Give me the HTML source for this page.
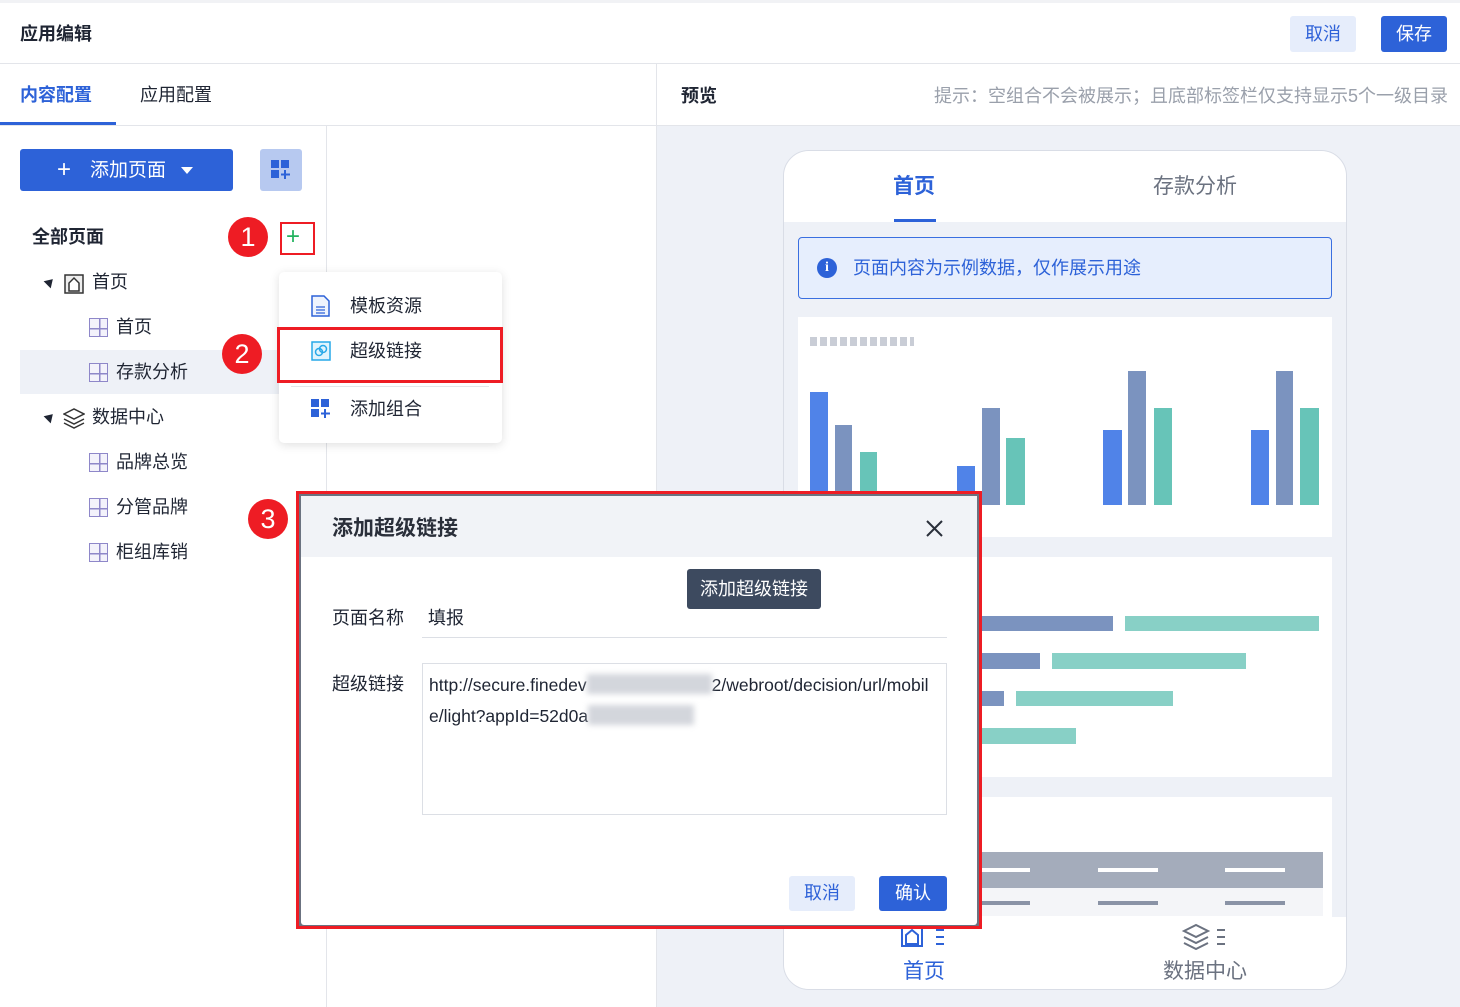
<!DOCTYPE html>
<html><head><meta charset="utf-8"><style>
*{margin:0;padding:0;box-sizing:border-box}
body{width:1460px;height:1007px;position:relative;overflow:hidden;background:#fff;font-family:"Liberation Sans","Noto Sans CJK SC",sans-serif;color:#1f2533}
.a{position:absolute}
.t{position:absolute;white-space:nowrap;line-height:1}
.circ{position:absolute;width:40px;height:40px;border-radius:50%;background:#ee1c24;color:#fff;font-size:27px;text-align:center;line-height:40px}
.pic{position:absolute;width:19px;height:19px;border:1.5px solid #8e87c9;background:linear-gradient(#8e87c9,#8e87c9) 9px 0/1.5px 100% no-repeat,linear-gradient(#8e87c9,#8e87c9) 0 9px/100% 1.5px no-repeat,#f3f2fb}
</style></head><body>
<!-- top bar -->
<div class="a" style="left:0;top:0;width:1460px;height:3px;background:#f1f2f5"></div>
<div class="t" style="left:20px;top:25px;font-size:18px;font-weight:bold">应用编辑</div>
<div class="a" style="left:1290px;top:16px;width:66px;height:36px;background:#e6edfb;border-radius:3px;color:#2f62d8;font-size:18px;text-align:center;line-height:36px">取消</div>
<div class="a" style="left:1381px;top:16px;width:66px;height:36px;background:#2d62d8;border-radius:3px;color:#fff;font-size:18px;text-align:center;line-height:36px">保存</div>
<div class="a" style="left:0;top:63px;width:1460px;height:1px;background:#e3e5ea"></div>
<!-- tabs -->
<div class="t" style="left:20px;top:86px;font-size:18px;color:#2d62d8;font-weight:bold">内容配置</div>
<div class="a" style="left:0;top:122px;width:116px;height:3px;background:#2d62d8"></div>
<div class="t" style="left:140px;top:86px;font-size:18px">应用配置</div>
<div class="a" style="left:0;top:125px;width:656px;height:1px;background:#e3e5ea"></div>
<div class="a" style="left:656px;top:64px;width:1px;height:943px;background:#e3e5ea"></div>
<div class="a" style="left:326px;top:126px;width:1px;height:881px;background:#e3e5ea"></div>
<!-- right panel -->
<div class="a" style="left:657px;top:64px;width:803px;height:62px;background:#fff;border-bottom:1px solid #e3e5ea"></div>
<div class="t" style="left:681px;top:87px;font-size:18px;font-weight:bold">预览</div>
<div class="t" style="right:12px;top:87px;font-size:18px;color:#9aa0ab">提示：空组合不会被展示；且底部标签栏仅支持显示5个一级目录</div>
<div class="a" style="left:657px;top:126px;width:803px;height:881px;background:#eef1f7"></div>
<!-- phone -->
<div class="a" style="left:783px;top:150px;width:564px;height:840px;background:#eef1f7;border:1px solid #d9dde6;border-radius:26px;overflow:hidden">
 <div class="a" style="left:0;top:0;width:564px;height:71px;background:#fff"></div>
 <div class="t" style="left:109px;top:25px;font-size:21px;color:#2d62d8;font-weight:bold">首页</div>
 <div class="a" style="left:110px;top:68px;width:42px;height:3px;background:#2d62d8"></div>
 <div class="t" style="left:369px;top:25px;font-size:21px;color:#6b7280">存款分析</div>
 <div class="a" style="left:14px;top:86px;width:534px;height:62px;background:#e6eefd;border:1px solid #3a6fe0;border-radius:4px"></div>
 <div class="a" style="left:33px;top:107px;width:20px;height:20px;border-radius:50%;background:#2d62d8;color:#fff;font-size:14px;font-weight:bold;text-align:center;line-height:20px;font-family:'Liberation Serif',serif">i</div>
 <div class="t" style="left:69px;top:108px;font-size:18px;color:#2d62d8">页面内容为示例数据，仅作展示用途</div>
 <div class="a" style="left:14px;top:166px;width:534px;height:220px;background:#fff"></div>
 <div class="a" style="left:14px;top:406px;width:534px;height:220px;background:#fff"></div>
 <div class="a" style="left:14px;top:646px;width:534px;height:120px;background:#fff"></div>
 <div class="a" style="left:0;top:766px;width:564px;height:74px;background:#fff"></div>
</div>
<!-- chart 1 -->
<div class="a" style="left:810px;top:337px;width:104px;height:9px;background:repeating-linear-gradient(90deg,#c9cdd6 0 7px,transparent 7px 10px)"></div>
<div class="a" style="left:810px;top:392px;width:18px;height:113px;background:#5083e8"></div>
<div class="a" style="left:835px;top:425px;width:17px;height:80px;background:#7b93bf"></div>
<div class="a" style="left:860px;top:452px;width:17px;height:53px;background:#67c4b8"></div>
<div class="a" style="left:957px;top:466px;width:18px;height:39px;background:#5083e8"></div>
<div class="a" style="left:982px;top:408px;width:18px;height:97px;background:#7b93bf"></div>
<div class="a" style="left:1006px;top:438px;width:19px;height:67px;background:#67c4b8"></div>
<div class="a" style="left:1103px;top:430px;width:19px;height:75px;background:#5083e8"></div>
<div class="a" style="left:1128px;top:371px;width:18px;height:134px;background:#7b93bf"></div>
<div class="a" style="left:1154px;top:408px;width:18px;height:97px;background:#67c4b8"></div>
<div class="a" style="left:1251px;top:430px;width:18px;height:75px;background:#5083e8"></div>
<div class="a" style="left:1276px;top:371px;width:17px;height:134px;background:#7b93bf"></div>
<div class="a" style="left:1300px;top:408px;width:19px;height:97px;background:#67c4b8"></div>
<!-- chart 2 -->
<div class="a" style="left:900px;top:616px;width:213px;height:15px;background:#7b93bf"></div>
<div class="a" style="left:1125px;top:616px;width:194px;height:15px;background:#88d0c6"></div>
<div class="a" style="left:900px;top:653px;width:140px;height:16px;background:#7b93bf"></div>
<div class="a" style="left:1052px;top:653px;width:194px;height:16px;background:#88d0c6"></div>
<div class="a" style="left:900px;top:691px;width:104px;height:15px;background:#7b93bf"></div>
<div class="a" style="left:1016px;top:691px;width:157px;height:15px;background:#88d0c6"></div>
<div class="a" style="left:900px;top:728px;width:176px;height:16px;background:#88d0c6"></div>
<!-- table -->
<div class="a" style="left:810px;top:852px;width:513px;height:36px;background:#a4acbb"></div>
<div class="a" style="left:810px;top:888px;width:513px;height:28px;background:#f4f5f8"></div>
<div class="a" style="left:970px;top:868px;width:60px;height:4px;background:#fff"></div>
<div class="a" style="left:1098px;top:868px;width:60px;height:4px;background:#fff"></div>
<div class="a" style="left:1225px;top:868px;width:60px;height:4px;background:#fff"></div>
<div class="a" style="left:970px;top:901px;width:60px;height:4px;background:#8a93a6"></div>
<div class="a" style="left:1098px;top:901px;width:60px;height:4px;background:#8a93a6"></div>
<div class="a" style="left:1225px;top:901px;width:60px;height:4px;background:#8a93a6"></div>
<!-- bottom nav -->
<svg class="a" style="left:900px;top:925px" width="48" height="24"><rect x="2" y="2" width="20" height="19" fill="none" stroke="#2d62d8" stroke-width="2"/><path d="M6 19V10l6-5 6 5v9z" fill="none" stroke="#2d62d8" stroke-width="2"/><path d="M36 5h8M36 12h8M36 19h8" stroke="#2d62d8" stroke-width="2"/></svg>
<div class="t" style="left:903px;top:961px;font-size:21px;color:#2d62d8">首页</div>
<svg class="a" style="left:1181px;top:922px" width="48" height="28"><path d="M3 9l12-6 12 6-12 6z M3 15l12 6 12-6 M3 21l12 6 12-6" fill="none" stroke="#6b7280" stroke-width="2"/><path d="M36 8h8M36 15h8M36 22h8" stroke="#6b7280" stroke-width="2"/></svg>
<div class="t" style="left:1163px;top:961px;font-size:21px;color:#6b7280">数据中心</div>

<!-- left panel -->
<div class="a" style="left:20px;top:149px;width:213px;height:42px;background:#2d62d8;border-radius:3px"></div>
<div class="t" style="left:57px;top:158px;font-size:24px;color:#fff;font-weight:300">+</div>
<div class="t" style="left:90px;top:161px;font-size:19px;color:#fff">添加页面</div>
<div class="a" style="left:181px;top:167px;border:6px solid transparent;border-top:7px solid #fff;border-bottom:0"></div>
<div class="a" style="left:260px;top:149px;width:42px;height:42px;background:#b7c9f0;border-radius:3px"></div>
<svg class="a" style="left:271px;top:160px" width="20" height="20"><rect x="0" y="0" width="8" height="8" fill="#2d62d8"/><rect x="10" y="0" width="8" height="8" fill="#2d62d8"/><rect x="0" y="10" width="8" height="8" fill="#2d62d8"/><path d="M14 10v9M10 14.5h9" stroke="#2d62d8" stroke-width="2"/></svg>
<div class="t" style="left:32px;top:228px;font-size:18px;font-weight:bold">全部页面</div>
<div class="circ" style="left:228px;top:217px">1</div>
<div class="a" style="left:280px;top:222px;width:35px;height:33px;border:2px solid #ee1c24"></div>
<div class="t" style="left:286px;top:225px;font-size:24px;color:#22b35e">+</div>
<!-- tree -->
<div class="a" style="left:45px;top:278px;border:5px solid transparent;border-bottom:8px solid #1f2533;border-top:0;transform:rotate(45deg)"></div>
<svg class="a" style="left:64px;top:274px" width="20" height="20"><rect x="1" y="1" width="18" height="18" fill="#eee" stroke="#333" stroke-width="1.5"/><path d="M5 17V9l5-5 5 5v8z" fill="#fff" stroke="#333" stroke-width="1.5"/></svg>
<div class="t" style="left:92px;top:273px;font-size:18px">首页</div>
<div class="pic" style="left:89px;top:318px"></div>
<div class="t" style="left:116px;top:318px;font-size:18px">首页</div>
<div class="a" style="left:20px;top:350px;width:260px;height:44px;background:#eef1f7"></div>
<div class="pic" style="left:89px;top:363px"></div>
<div class="t" style="left:116px;top:363px;font-size:18px">存款分析</div>
<div class="a" style="left:45px;top:413px;border:5px solid transparent;border-bottom:8px solid #1f2533;border-top:0;transform:rotate(45deg)"></div>
<svg class="a" style="left:63px;top:407px" width="22" height="22"><path d="M1 7l10-5 10 5-10 5z M1 12l10 5 10-5 M1 16l10 5 10-5" fill="none" stroke="#333" stroke-width="1.5"/></svg>
<div class="t" style="left:92px;top:408px;font-size:18px">数据中心</div>
<div class="pic" style="left:89px;top:453px"></div>
<div class="t" style="left:116px;top:453px;font-size:18px">品牌总览</div>
<div class="pic" style="left:89px;top:498px"></div>
<div class="t" style="left:116px;top:498px;font-size:18px">分管品牌</div>
<div class="pic" style="left:89px;top:543px"></div>
<div class="t" style="left:116px;top:543px;font-size:18px">柜组库销</div>
<!-- dropdown -->
<div class="a" style="left:279px;top:272px;width:223px;height:171px;background:#fff;border-radius:5px;box-shadow:0 2px 10px rgba(0,0,0,.13)"></div>
<svg class="a" style="left:311px;top:295px" width="20" height="22"><path d="M1 1h12l5 5v15H1z" fill="#eef3fd" stroke="#2d62d8" stroke-width="1.5"/><path d="M5 12h9M5 15h9M5 18h9" stroke="#2d62d8" stroke-width="1.2"/></svg>
<div class="t" style="left:350px;top:297px;font-size:18px">模板资源</div>
<svg class="a" style="left:311px;top:341px" width="20" height="20"><rect x="1" y="1" width="18" height="18" fill="#e0f4fd" stroke="#27a8e8" stroke-width="1.5"/><circle cx="8" cy="11" r="3.5" fill="none" stroke="#27a8e8" stroke-width="1.5"/><circle cx="12" cy="8" r="3.5" fill="none" stroke="#27a8e8" stroke-width="1.5"/></svg>
<div class="t" style="left:350px;top:342px;font-size:18px">超级链接</div>
<div class="a" style="left:277px;top:327px;width:226px;height:56px;border:3px solid #ee1c24"></div>
<div class="a" style="left:291px;top:386px;width:198px;height:1px;background:#e3e5ea"></div>
<svg class="a" style="left:311px;top:399px" width="20" height="20"><rect x="0" y="0" width="8" height="8" fill="#2d62d8"/><rect x="10" y="0" width="8" height="8" fill="#2d62d8"/><rect x="0" y="10" width="8" height="8" fill="#2d62d8"/><path d="M14 10v9M10 14.5h9" stroke="#2d62d8" stroke-width="2"/></svg>
<div class="t" style="left:350px;top:400px;font-size:18px">添加组合</div>
<div class="circ" style="left:222px;top:334px">2</div>
<div class="circ" style="left:248px;top:499px">3</div>

<!-- dialog -->
<div class="a" style="left:296px;top:491px;width:686px;height:438px;border:3px solid #ee1c24;background:#6b7280"></div>
<div class="a" style="left:301px;top:496px;width:676px;height:429px;background:#fff;border-radius:3px"></div>
<div class="a" style="left:301px;top:496px;width:676px;height:61px;background:#f1f3f7"></div>
<div class="t" style="left:332px;top:518px;font-size:21px;font-weight:bold;color:#2a2f3a">添加超级链接</div>
<svg class="a" style="left:925px;top:519px" width="19" height="19"><path d="M2 2l15 15M17 2L2 17" stroke="#2a2f3a" stroke-width="2"/></svg>
<div class="a" style="left:687px;top:569px;width:134px;height:40px;background:#3d4a5f;border-radius:3px;color:#fff;font-size:18px;text-align:center;line-height:40px">添加超级链接</div>
<div class="t" style="left:332px;top:609px;font-size:18px">页面名称</div>
<div class="t" style="left:428px;top:609px;font-size:18px">填报</div>
<div class="a" style="left:422px;top:637px;width:525px;height:1px;background:#dcdfe5"></div>
<div class="t" style="left:332px;top:675px;font-size:18px">超级链接</div>
<div class="a" style="left:422px;top:663px;width:525px;height:152px;border:1px solid #dcdfe5"></div>
<div class="t" style="left:429px;top:674px;font-size:17.5px">http://secure.finedev<span style="display:inline-block;width:125px;height:20px;background:#d3d6dc;filter:blur(3px);vertical-align:-3px"></span>2/webroot/decision/url/mobil</div>
<div class="t" style="left:429px;top:705px;font-size:17.5px">e/light?appId=52d0a<span style="display:inline-block;width:106px;height:20px;background:#d3d6dc;filter:blur(3px);vertical-align:-3px"></span></div>
<div class="a" style="left:789px;top:876px;width:66px;height:35px;background:#e6edfb;border-radius:3px;color:#2f62d8;font-size:18px;text-align:center;line-height:35px">取消</div>
<div class="a" style="left:879px;top:876px;width:68px;height:35px;background:#2d62d8;border-radius:3px;color:#fff;font-size:18px;text-align:center;line-height:35px">确认</div>
</body></html>
